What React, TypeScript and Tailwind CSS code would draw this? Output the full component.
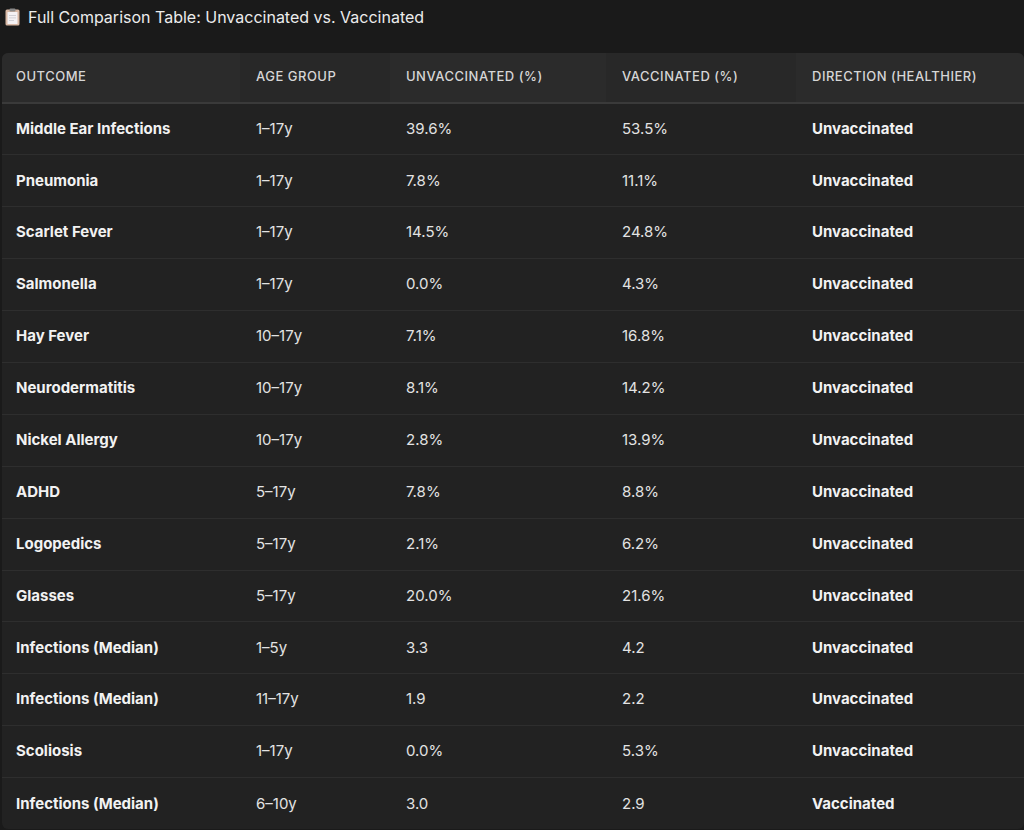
const rows: [string, string, string, string, string][] = [
  ["Middle Ear Infections", "1–17y", "39.6%", "53.5%", "Unvaccinated"],
  ["Pneumonia", "1–17y", "7.8%", "11.1%", "Unvaccinated"],
  ["Scarlet Fever", "1–17y", "14.5%", "24.8%", "Unvaccinated"],
  ["Salmonella", "1–17y", "0.0%", "4.3%", "Unvaccinated"],
  ["Hay Fever", "10–17y", "7.1%", "16.8%", "Unvaccinated"],
  ["Neurodermatitis", "10–17y", "8.1%", "14.2%", "Unvaccinated"],
  ["Nickel Allergy", "10–17y", "2.8%", "13.9%", "Unvaccinated"],
  ["ADHD", "5–17y", "7.8%", "8.8%", "Unvaccinated"],
  ["Logopedics", "5–17y", "2.1%", "6.2%", "Unvaccinated"],
  ["Glasses", "5–17y", "20.0%", "21.6%", "Unvaccinated"],
  ["Infections (Median)", "1–5y", "3.3", "4.2", "Unvaccinated"],
  ["Infections (Median)", "11–17y", "1.9", "2.2", "Unvaccinated"],
  ["Scoliosis", "1–17y", "0.0%", "5.3%", "Unvaccinated"],
  ["Infections (Median)", "6–10y", "3.0", "2.9", "Vaccinated"],
];

const headers = [
  { label: "OUTCOME", w: "w-[238px] pl-[14px]", bg: "bg-[#2b2b2b]" },
  { label: "AGE GROUP", w: "w-[150px] pl-[16px]", bg: "bg-[#282828]" },
  { label: "UNVACCINATED (%)", w: "w-[216px] pl-[16px]", bg: "bg-[#2b2b2b]" },
  { label: "VACCINATED (%)", w: "w-[190px] pl-[16px]", bg: "bg-[#282828]" },
  { label: "DIRECTION (HEALTHIER)", w: "w-[228px] pl-[16px]", bg: "bg-[#2b2b2b]" },
];

function ClipboardIcon() {
  return (
    <svg width="15" height="18" viewBox="0 0 15 18" className="shrink-0">
      <rect x="0.5" y="1.5" width="14" height="16" rx="1.5" fill="#d9b9a6" />
      <rect x="2.5" y="4" width="10" height="12" rx="0.5" fill="#f4f1f4" />
      <rect x="4.5" y="0.5" width="6" height="3" rx="1" fill="#8a8a8a" />
      <rect x="4" y="7" width="7" height="0.8" fill="#c9c9cf" />
      <rect x="4" y="9.5" width="7" height="0.8" fill="#c9c9cf" />
      <rect x="4" y="12" width="5" height="0.8" fill="#c9c9cf" />
    </svg>
  );
}

export default function App() {
  return (
    <div className="w-[1024px] h-[830px] overflow-hidden bg-[#1a1a1a] font-['Inter',sans-serif] text-[#e3e3e3]">
      <div className="flex items-center gap-[8px] pl-[5px] h-[33px] pt-[1px]">
        <ClipboardIcon />
        <h2 className="text-[16px] text-[#ececec]">Full Comparison Table: Unvaccinated vs. Vaccinated</h2>
      </div>
      <div className="ml-[2px] mt-[20px] rounded-[6px] overflow-hidden bg-[#222222]">
        <table className="border-collapse table-fixed w-[1022px]">
          <thead>
            <tr className="border-b-2 border-[#3a3a3a]">
              {headers.map((h) => (
                <th
                  key={h.label}
                  className={`${h.w} ${h.bg} h-[50px] pb-[1px] text-left text-[13px] font-medium tracking-[0.5px] text-[#d6d6d6]`}
                >
                  {h.label}
                </th>
              ))}
            </tr>
          </thead>
          <tbody>
            {rows.map((r, i) => (
              <tr key={i} className={i < rows.length - 1 ? "border-b border-[#2e2e2e]" : ""}>
                <td className="h-[51.9px] pl-[14px] text-[15px] font-bold text-[#f2f2f2]">{r[0]}</td>
                <td className="pl-[16px] text-[15px]">{r[1]}</td>
                <td className="pl-[16px] text-[15px]">{r[2]}</td>
                <td className="pl-[16px] text-[15px]">{r[3]}</td>
                <td className="pl-[16px] text-[15px] font-bold text-[#f2f2f2]">{r[4]}</td>
              </tr>
            ))}
          </tbody>
        </table>
      </div>
    </div>
  );
}
